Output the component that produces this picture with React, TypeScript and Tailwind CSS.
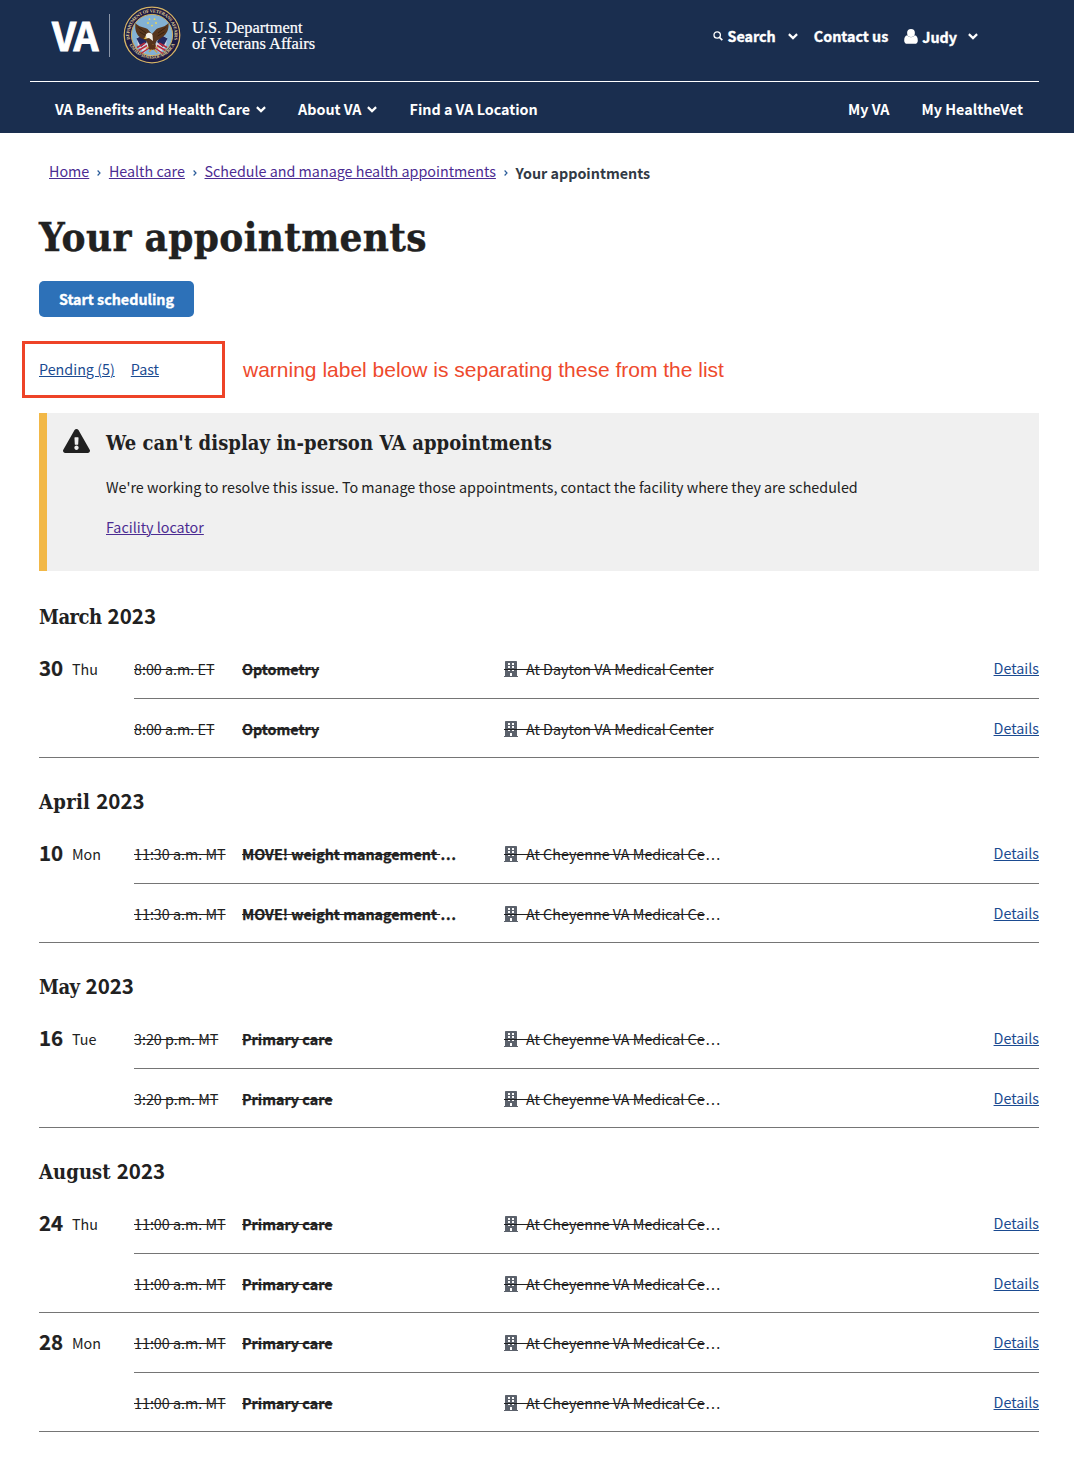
import type { ReactNode } from 'react';
import { FaBuilding, FaExclamationTriangle } from 'react-icons/fa';

const sans = 'font-["Noto_Sans_CJK_JP","Source_Sans_Pro",sans-serif]';
const slab = 'font-["DejaVu_Serif_Condensed","DejaVu_Serif",serif]';

function ChevronDown({ className = '' }: { className?: string }) {
  return (
    <svg viewBox="0 0 10 7" className={`h-[7px] w-[10px] shrink-0 ${className}`} fill="none" stroke="currentColor" strokeWidth="2.2">
      <path d="M0.9 1.1 5 5.1 9.1 1.1" />
    </svg>
  );
}

function Crumb() {
  return (
    <svg viewBox="0 0 4 6" className="ml-2 mr-[7.600px] mt-1 h-[6px] w-[4px] shrink-0" fill="none" stroke="#2a5c9a" strokeWidth="1.2">
      <path d="M0.6 0.5 3 3 0.6 5.5" />
    </svg>
  );
}

function Seal() {
  return (
    <svg viewBox="0 0 60 60" className="ml-[12px] h-[60px] w-[60px] shrink-0 overflow-visible">
      <circle cx="30" cy="30" r="28.8" fill="#17194a" />
      <circle cx="30" cy="30" r="27.8" fill="#1b1b45" stroke="#d3b665" strokeWidth="1.3" />
      <circle cx="30" cy="30" r="20.6" fill="#83b1d4" stroke="#cfae5a" strokeWidth="1" />
      <path id="seal-top" d="M8.200 35.500A22.500 22.500 0 1 1 51.800 35.500" fill="none" />
      <path id="seal-bottom" d="M6.600 38A25.300 25.300 0 0 0 53.400 38" fill="none" />
      <g fill="#e2cf96" fontSize="4.6" fontWeight="700" fontFamily="Liberation Serif, serif">
        <text>
          <textPath href="#seal-top" startOffset="1" textLength="80">DEPARTMENT OF VETERANS AFFAIRS</textPath>
        </text>
        <text>
          <textPath href="#seal-bottom" startOffset="2" textLength="56">UNITED STATES OF AMERICA</textPath>
        </text>
      </g>
      <g fill="#f0d84c">
        <circle cx="27.5" cy="14.2" r="0.9" />
        <circle cx="32.5" cy="14.2" r="0.9" />
        <circle cx="26" cy="18" r="0.9" />
        <circle cx="34" cy="18" r="0.9" />
        <circle cx="30" cy="20.6" r="0.9" />
      </g>
      <path d="M15 33c2-2 5-2 8 0l5 9-6 6-6-7z" fill="#d9d6df" />
      <path d="M45 33c-2-2-5-2-8 0l-5 9 6 6 6-7z" fill="#d9d6df" />
      <path d="M14.5 33.5 21 30l4 7-6 5zM45.500 33.500 39 30l-4 7 6 5z" fill="#22285f" />
      <path d="M15 42.500 23 38M16.500 45.500 25 40.500M19 48.500 27 43M45 42.500 37 38M43.500 45.500 35 40.500M41 48.500 33 43" stroke="#b8293d" strokeWidth="1.5" />
      <path d="M13.500 18c3 4 8 4 12 6l4.500 5 4.500-5c4-2 9-2 12-6 .5 6-1.500 11-6 14l-6 4-3.500 9h-2.500l-4-9-5.500-3c-4.500-3-6.500-8-5.500-15z" fill="#57351d" />
      <path d="M16.500 22.500l7.500 5.500M17.500 27l7 4M43.500 22.500 36 28M42.500 27l-7 4" stroke="#34200f" strokeWidth="0.9" />
      <path d="M24 29.500c1.500-2.500 5.500-2 6.500.5l.5 6-4-3-4 .8z" fill="#f3efe8" />
      <path d="M24.300 31.200l-2.800 2.600 2.800.2z" fill="#e5b93f" />
      <path d="M24 43.500 31 40l5 3.500M27 47l4-4 4 4.500" stroke="#cda043" strokeWidth="1.3" fill="none" />
      <path d="M26 39.500h8l-1 5h-6z" fill="#5a3319" />
    </svg>
  );
}

function UserIcon() {
  return (
    <svg viewBox="0 0 14 15" className="mr-1 h-[15px] w-[14px] shrink-0" fill="currentColor">
      <circle cx="7" cy="4" r="3.9" />
      <path d="M3.300 6.300C1.100 6.500.2 8.800.2 11.700.2 13.700 1.500 14.800 3.100 14.800h7.800c1.600 0 2.900-1.100 2.900-3.100 0-2.900-.9-5.200-3.100-5.400C9.700 7.500 8.500 8.300 7 8.300S4.300 7.500 3.300 6.300z" />
    </svg>
  );
}

function SearchIcon() {
  return (
    <svg viewBox="0 0 10 10" className="mr-[5px] h-[10px] w-[10px] shrink-0" fill="none" stroke="currentColor">
      <circle cx="4.200" cy="4" r="3.200" strokeWidth="1.300" />
      <path d="M6.600 6.500 9.300 9.200" strokeWidth="1.700" />
    </svg>
  );
}

function Header() {
  return (
    <header className="h-[133px] bg-[#1a2e4f] text-white">
      <div className="ml-[30px] mr-[35px] flex h-[82px] border-b border-white pl-[22px]">
        <div className="flex h-[70px] items-center">
          <span className="-mt-[3px] w-[57px] text-[39px] font-bold leading-[42px] tracking-[-1.8px] [-webkit-text-stroke:0.9px_white]">VA</span>
          <span className="h-[43px] w-px bg-[#8a95a8]" />
          <Seal />
          <div className='ml-[10px] mt-px whitespace-nowrap font-["Liberation_Serif",serif] text-[16.400px] leading-[17px] [-webkit-text-stroke:0.2px_white]'>
            <p>U.S. Department</p>
            <p className="-mt-px">of Veterans Affairs</p>
          </div>
        </div>
        <div className="ml-auto mr-[61px] flex h-[72px] items-center font-bold leading-[22px] [-webkit-text-stroke:0.35px_white]">
          <SearchIcon />
          <span>Search</span>
          <ChevronDown className="ml-[12px]" />
          <span className="mx-4">Contact us</span>
          <UserIcon />
          <span className="mt-[2px]">Judy</span>
          <ChevronDown className="ml-[11px]" />
        </div>
      </div>
      <nav className="ml-[55px] mr-[51px] flex h-[51px] items-center pt-[3px] font-bold leading-[22px]">
        <span>VA Benefits and Health Care</span>
        <ChevronDown className="ml-[6px] mr-8" />
        <span>About VA</span>
        <ChevronDown className="ml-[5px] mr-[33px]" />
        <span>Find a VA Location</span>
        <span className="ml-auto">My VA</span>
        <span className="ml-8">My HealtheVet</span>
      </nav>
    </header>
  );
}

function Link({ children, visited = false, className = '' }: { children: ReactNode; visited?: boolean; className?: string }) {
  return (
    <a
      href="#"
      className={`whitespace-nowrap underline decoration-1 underline-offset-[0.5px] ${visited ? 'text-[#4c2c92]' : 'text-[#1b4b91]'} ${className}`}
    >
      {children}
    </a>
  );
}

type Appointment = { time: string; type: string; place: string; cutType?: boolean; cutPlace?: boolean };
type Day = { date: string; weekday: string; items: Appointment[] };
type Month = { name: string; year: string; tracking: string; days: Day[] };

const twice = (a: Appointment) => [a, a];
const cheyenne = { place: 'At Cheyenne VA Medical Ce', cutPlace: true };
const months: Month[] = [
  { name: 'March', year: '2023', tracking: 'tracking-[-0.5px]', days: [{ date: '30', weekday: 'Thu', items: twice({ time: '8:00 a.m. ET', type: 'Optometry', place: 'At Dayton VA Medical Center' }) }] },
  { name: 'April', year: '2023', tracking: 'tracking-[0.3px]', days: [{ date: '10', weekday: 'Mon', items: twice({ time: '11:30 a.m. MT', type: 'MOVE! weight management ', cutType: true, ...cheyenne }) }] },
  { name: 'May', year: '2023', tracking: 'tracking-[-0.5px]', days: [{ date: '16', weekday: 'Tue', items: twice({ time: '3:20 p.m. MT', type: 'Primary care', ...cheyenne }) }] },
  {
    name: 'August',
    year: '2023',
    tracking: 'tracking-[0.1px]',
    days: [
      { date: '24', weekday: 'Thu', items: twice({ time: '11:00 a.m. MT', type: 'Primary care', ...cheyenne }) },
      { date: '28', weekday: 'Mon', items: twice({ time: '11:00 a.m. MT', type: 'Primary care', ...cheyenne }) },
    ],
  },
];

function Row({ item, last }: { item: Appointment; last: boolean }) {
  return (
    <li className={`flex whitespace-pre pt-[19px] leading-[22px] ${last ? 'h-[58px]' : 'h-[60px] border-b border-[#757575]'}`}>
      <span className="w-[108px] line-through decoration-1">{item.time}</span>
      <span className="w-[262px] font-bold [-webkit-text-stroke:0.25px_#212121]">
        <span className="line-through decoration-1">{item.type}</span>
        {item.cutType && '…'}
      </span>
      <span className="relative flex">
        <FaBuilding className="mr-2 mt-[3px] h-4 w-[14px] text-[#5b616b]" />
        <span className="absolute left-0 top-[11px] h-px w-[22px] bg-[#212121]" />
        <span className="line-through decoration-1">{item.place}</span>
        {item.cutPlace && <span className="ml-px tracking-[1.300px]">...</span>}
      </span>
      <Link className="-mt-px ml-auto">Details</Link>
    </li>
  );
}

function MonthList({ month }: { month: Month }) {
  return (
    <section className="mt-[22px]">
      <h2 className={`flex h-11 text-[20px] font-bold leading-[44px] ${slab}`}>
        <span className={month.tracking}>{month.name}</span>
        <span className={`ml-[6px] text-[20.500px] leading-[40px] ${sans}`}>{month.year}</span>
      </h2>
      {month.days.map((day) => (
        <div key={day.date} className="flex border-b border-[#757575]">
          <div className="flex w-[95px] pt-[19px] leading-[22px]">
            <span className="w-[33px] text-[20.500px] font-bold leading-[18px] [-webkit-text-stroke:0.2px_#212121]">{day.date}</span>
            <span>{day.weekday}</span>
          </div>
          <ul className="flex-1">
            {day.items.map((item, i) => (
              <Row key={i} item={item} last={i === day.items.length - 1} />
            ))}
          </ul>
        </div>
      ))}
    </section>
  );
}

export default function App() {
  return (
    <div className={`h-[1468px] w-[1074px] overflow-hidden bg-white text-[14.320px] text-[#212121] ${sans}`}>
      <Header />
      <main className="ml-[39px] mr-[35px]">
        <div className="ml-[10px] flex h-[75px] items-center leading-[22px]">
          <Link visited>Home</Link>
          <Crumb />
          <Link visited>Health care</Link>
          <Crumb />
          <Link visited>Schedule and manage health appointments</Link>
          <Crumb />
          <span className="mt-1 font-bold text-[#323a45]">Your appointments</span>
        </div>
        <h1 className={`text-[40px] font-bold leading-[58px] tracking-[0.35px] [-webkit-text-stroke:0.4px_#212121] ${slab}`}>Your appointments</h1>
        <button className="mt-[15px] block h-9 w-[155px] rounded-[5px] bg-[#2d71b8] font-bold leading-[36px] text-white [-webkit-text-stroke:0.35px_white]">
          Start scheduling
        </button>
        <div className="relative mt-[41px] flex h-[22px] items-center gap-4 leading-[22px]">
          <Link>Pending (5)</Link>
          <Link>Past</Link>
          <div className="absolute -left-[17px] -top-[17px] h-[57px] w-[203px] border-[3px] border-[#ee4327]" />
          <span className='absolute left-[204px] top-px whitespace-nowrap font-["Liberation_Sans",sans-serif] text-[21px] leading-[22px] text-[#ee4a2d]'>
            warning label below is separating these from the list
          </span>
        </div>
        <div className="mt-[33px] flex h-[158px] border-l-8 border-[#f2b847] bg-[#f0f0f0] pl-4">
          <FaExclamationTriangle className="mt-[16px] h-6 w-[27px]" />
          <div className="ml-4 leading-[22px]">
            <h2 className={`mt-[18px] text-[20px] font-bold leading-[24px] tracking-[0.06px] ${slab}`}>We can't display in-person VA appointments</h2>
            <p className="mt-[21px]">
              We're working to resolve this issue. To manage those appointments, contact the facility where they are scheduled
            </p>
            <p className="mt-[18px]">
              <Link visited>Facility locator</Link>
            </p>
          </div>
        </div>
        <div className="pt-[2px]">
          {months.map((m) => (
            <MonthList key={m.name} month={m} />
          ))}
        </div>
      </main>
    </div>
  );
}
